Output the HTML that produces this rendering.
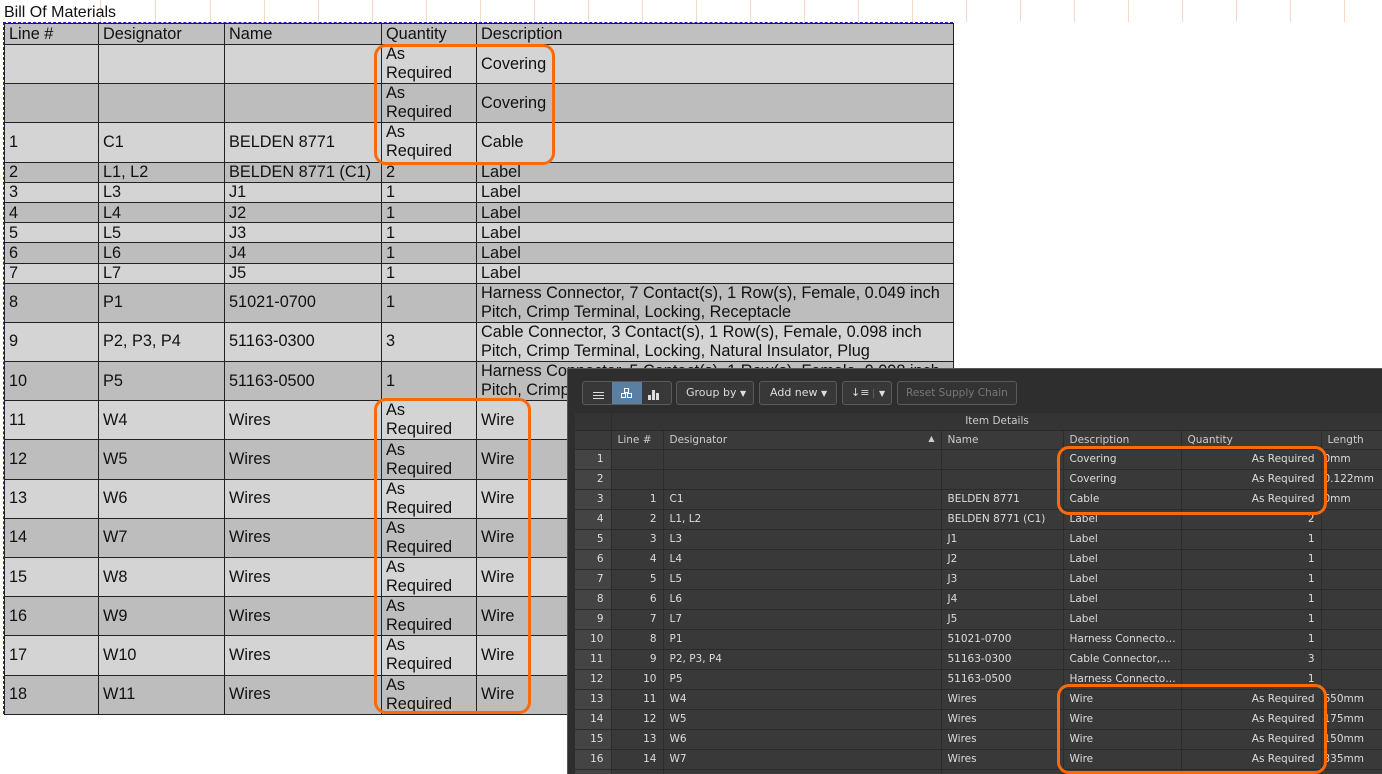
<!DOCTYPE html>
<html><head><meta charset="utf-8"><style>
*{margin:0;padding:0;box-sizing:border-box}
html,body{width:1382px;height:774px;overflow:hidden}
body{background:#fff;position:relative;font-family:"Liberation Sans",Arial,sans-serif}
.grid{position:absolute;top:0;width:1px;height:22px;background:#f6d8c8}
.title{position:absolute;left:4px;top:4px;font-size:16px;color:#111}
table.bom{position:absolute;left:4px;top:23px;border-collapse:collapse;font-size:16.3px;color:#111;table-layout:fixed;width:949px}
.bom td{border:1.5px solid #222;padding:0 4px;line-height:19px;vertical-align:middle;white-space:nowrap;overflow:hidden}
.bom tr.h td{background:#c0c0c0;height:21px}
.bom tr.a td{background:#d4d4d4}
.bom tr.b td{background:#bdbdbd}
.bom tr.t td{height:39.2px}
.bom tr.s td{height:20.2px;line-height:18px}
.dash{position:absolute;left:3px;top:22px;width:950px;height:692px;border:1px dashed #2222cc;border-bottom:none;border-right:none}
.ob{position:absolute;border:3px solid #fb6a0a;border-radius:12px}
.panel{position:absolute;left:567px;top:368px;width:815px;height:406px;overflow:hidden;background:#2e2e2e;border-left:1px solid #555;border-top:1px solid #555;font-family:"DejaVu Sans",sans-serif;font-size:10.5px;color:#e0e0e0}
.tb{position:absolute;top:12px;height:24px;border:1px solid #5a5a5a;border-radius:3px;background:#383838;color:#ddd;line-height:22px;font-size:11px;white-space:nowrap;overflow:hidden}
table.g{position:absolute;left:7px;top:44px;border-collapse:collapse;table-layout:fixed;width:808px}
.g td{height:20px;border-bottom:1px solid #2a2a2a;border-right:1px solid #2c2c2c;background:#393939;padding:0 6px;white-space:nowrap;overflow:hidden;font-size:10.5px;color:#ddd}
.g td.n{background:#444;text-align:right;padding-right:7px}
.g td.r{text-align:right}
.g tr.hd td{background:#3a3a3a;color:#ccc;height:19px}
.g tr.it td{background:#343434;height:17px;text-align:center;color:#ccc}
</style></head><body>
<div class="grid" style="left:100px"></div><div class="grid" style="left:155px"></div><div class="grid" style="left:210px"></div><div class="grid" style="left:264px"></div><div class="grid" style="left:318px"></div><div class="grid" style="left:372px"></div><div class="grid" style="left:426px"></div><div class="grid" style="left:480px"></div><div class="grid" style="left:534px"></div><div class="grid" style="left:588px"></div><div class="grid" style="left:642px"></div><div class="grid" style="left:696px"></div><div class="grid" style="left:750px"></div><div class="grid" style="left:804px"></div><div class="grid" style="left:858px"></div><div class="grid" style="left:912px"></div><div class="grid" style="left:966px"></div><div class="grid" style="left:1020px"></div><div class="grid" style="left:1074px"></div><div class="grid" style="left:1128px"></div><div class="grid" style="left:1182px"></div><div class="grid" style="left:1236px"></div><div class="grid" style="left:1290px"></div><div class="grid" style="left:1344px"></div>
<div class="title">Bill Of Materials</div>
<table class="bom">
<colgroup><col style="width:94px"><col style="width:126px"><col style="width:157px"><col style="width:95px"><col style="width:477px"></colgroup>
<tr class="h"><td>Line #</td><td>Designator</td><td>Name</td><td>Quantity</td><td>Description</td></tr>
<tr class="a t"><td></td><td></td><td></td><td>As<br>Required</td><td>Covering</td></tr>
<tr class="b t"><td></td><td></td><td></td><td>As<br>Required</td><td>Covering</td></tr>
<tr class="a t"><td>1</td><td>C1</td><td>BELDEN 8771</td><td>As<br>Required</td><td>Cable</td></tr>
<tr class="b s"><td>2</td><td>L1, L2</td><td>BELDEN 8771 (C1)</td><td>2</td><td>Label</td></tr>
<tr class="a s"><td>3</td><td>L3</td><td>J1</td><td>1</td><td>Label</td></tr>
<tr class="b s"><td>4</td><td>L4</td><td>J2</td><td>1</td><td>Label</td></tr>
<tr class="a s"><td>5</td><td>L5</td><td>J3</td><td>1</td><td>Label</td></tr>
<tr class="b s"><td>6</td><td>L6</td><td>J4</td><td>1</td><td>Label</td></tr>
<tr class="a s"><td>7</td><td>L7</td><td>J5</td><td>1</td><td>Label</td></tr>
<tr class="b t"><td>8</td><td>P1</td><td>51021-0700</td><td>1</td><td>Harness Connector, 7 Contact(s), 1 Row(s), Female, 0.049 inch<br>Pitch, Crimp Terminal, Locking, Receptacle</td></tr>
<tr class="a t"><td>9</td><td>P2, P3, P4</td><td>51163-0300</td><td>3</td><td>Cable Connector, 3 Contact(s), 1 Row(s), Female, 0.098 inch<br>Pitch, Crimp Terminal, Locking, Natural Insulator, Plug</td></tr>
<tr class="b t"><td>10</td><td>P5</td><td>51163-0500</td><td>1</td><td>Harness Connector, 5 Contact(s), 1 Row(s), Female, 0.098 inch<br>Pitch, Crimp Terminal</td></tr>
<tr class="a t"><td>11</td><td>W4</td><td>Wires</td><td>As<br>Required</td><td>Wire</td></tr>
<tr class="b t"><td>12</td><td>W5</td><td>Wires</td><td>As<br>Required</td><td>Wire</td></tr>
<tr class="a t"><td>13</td><td>W6</td><td>Wires</td><td>As<br>Required</td><td>Wire</td></tr>
<tr class="b t"><td>14</td><td>W7</td><td>Wires</td><td>As<br>Required</td><td>Wire</td></tr>
<tr class="a t"><td>15</td><td>W8</td><td>Wires</td><td>As<br>Required</td><td>Wire</td></tr>
<tr class="b t"><td>16</td><td>W9</td><td>Wires</td><td>As<br>Required</td><td>Wire</td></tr>
<tr class="a t"><td>17</td><td>W10</td><td>Wires</td><td>As<br>Required</td><td>Wire</td></tr>
<tr class="b t"><td>18</td><td>W11</td><td>Wires</td><td>As<br>Required</td><td>Wire</td></tr>
</table>
<div class="dash"></div>
<div class="ob" style="left:374px;top:44px;width:181px;height:121px"></div>
<div class="ob" style="left:374px;top:398px;width:157px;height:316px"></div>

<div class="panel">
<div class="tb" style="left:14px;width:90px;padding:0"><div style="position:absolute;left:29px;top:0;width:30px;height:22px;background:#5b7ea3"></div>
<svg style="position:absolute;left:0;top:0" width="90" height="22"><g stroke="#ddd" stroke-width="1"><line x1="10" y1="10.5" x2="21" y2="10.5"/><line x1="10" y1="13.5" x2="21" y2="13.5"/><line x1="10" y1="16.5" x2="21" y2="16.5"/></g><g fill="none" stroke="#fff" stroke-width="1"><rect x="41.5" y="6.5" width="4" height="4"/><rect x="38.5" y="11.5" width="4" height="4"/><rect x="44.5" y="11.5" width="4" height="4"/></g><g fill="#ddd"><rect x="65" y="13" width="3" height="5"/><rect x="69" y="8" width="3" height="10"/><rect x="73" y="11" width="3" height="7"/></g></svg></div>
<div class="tb" style="left:108px;width:78px;padding-left:9px">Group by <span style="font-size:8px">▼</span></div>
<div class="tb" style="left:191px;width:78px;padding-left:10px">Add new <span style="font-size:8px">▼</span></div>
<div class="tb" style="left:274px;width:50px;padding-left:8px">↓≡ <span style="border-left:1px solid #5a5a5a;padding-left:5px;font-size:8px">▼</span></div>
<div class="tb" style="left:329px;width:120px;padding-left:8px;color:#777;background:#333;font-size:10.5px">Reset Supply Chain</div>
<table class="g">
<colgroup><col style="width:36px"><col style="width:52px"><col style="width:278px"><col style="width:122px"><col style="width:118px"><col style="width:140px"><col style="width:62px"></colgroup>
<tr class="it"><td style="background:#343434"></td><td colspan="6">Item Details</td></tr>
<tr class="hd"><td class="n" style="background:#3a3a3a"></td><td>Line #</td><td>Designator<span style="float:right;font-size:8px">▲</span></td><td>Name</td><td>Description</td><td>Quantity</td><td>Length</td></tr>
<tr><td class="n">1</td><td></td><td></td><td></td><td>Covering</td><td class="r">As Required</td><td style="padding-left:2px">0mm</td></tr>
<tr><td class="n">2</td><td></td><td></td><td></td><td>Covering</td><td class="r">As Required</td><td style="padding-left:2px">0.122mm</td></tr>
<tr><td class="n">3</td><td class="r">1</td><td>C1</td><td>BELDEN 8771</td><td>Cable</td><td class="r">As Required</td><td style="padding-left:2px">0mm</td></tr>
<tr><td class="n">4</td><td class="r">2</td><td>L1, L2</td><td>BELDEN 8771 (C1)</td><td>Label</td><td class="r">2</td><td></td></tr>
<tr><td class="n">5</td><td class="r">3</td><td>L3</td><td>J1</td><td>Label</td><td class="r">1</td><td></td></tr>
<tr><td class="n">6</td><td class="r">4</td><td>L4</td><td>J2</td><td>Label</td><td class="r">1</td><td></td></tr>
<tr><td class="n">7</td><td class="r">5</td><td>L5</td><td>J3</td><td>Label</td><td class="r">1</td><td></td></tr>
<tr><td class="n">8</td><td class="r">6</td><td>L6</td><td>J4</td><td>Label</td><td class="r">1</td><td></td></tr>
<tr><td class="n">9</td><td class="r">7</td><td>L7</td><td>J5</td><td>Label</td><td class="r">1</td><td></td></tr>
<tr><td class="n">10</td><td class="r">8</td><td>P1</td><td>51021-0700</td><td>Harness Connecto…</td><td class="r">1</td><td></td></tr>
<tr><td class="n">11</td><td class="r">9</td><td>P2, P3, P4</td><td>51163-0300</td><td>Cable Connector,…</td><td class="r">3</td><td></td></tr>
<tr><td class="n">12</td><td class="r">10</td><td>P5</td><td>51163-0500</td><td>Harness Connecto…</td><td class="r">1</td><td></td></tr>
<tr><td class="n">13</td><td class="r">11</td><td>W4</td><td>Wires</td><td>Wire</td><td class="r">As Required</td><td style="padding-left:2px">650mm</td></tr>
<tr><td class="n">14</td><td class="r">12</td><td>W5</td><td>Wires</td><td>Wire</td><td class="r">As Required</td><td style="padding-left:2px">175mm</td></tr>
<tr><td class="n">15</td><td class="r">13</td><td>W6</td><td>Wires</td><td>Wire</td><td class="r">As Required</td><td style="padding-left:2px">150mm</td></tr>
<tr><td class="n">16</td><td class="r">14</td><td>W7</td><td>Wires</td><td>Wire</td><td class="r">As Required</td><td style="padding-left:2px">335mm</td></tr>
<tr><td class="n"></td><td></td><td></td><td></td><td></td><td></td><td></td></tr>
</table>
</div>
<div class="ob" style="left:1057px;top:446px;width:270px;height:69px"></div>
<div class="ob" style="left:1057px;top:684px;width:270px;height:90px"></div>
</body></html>
